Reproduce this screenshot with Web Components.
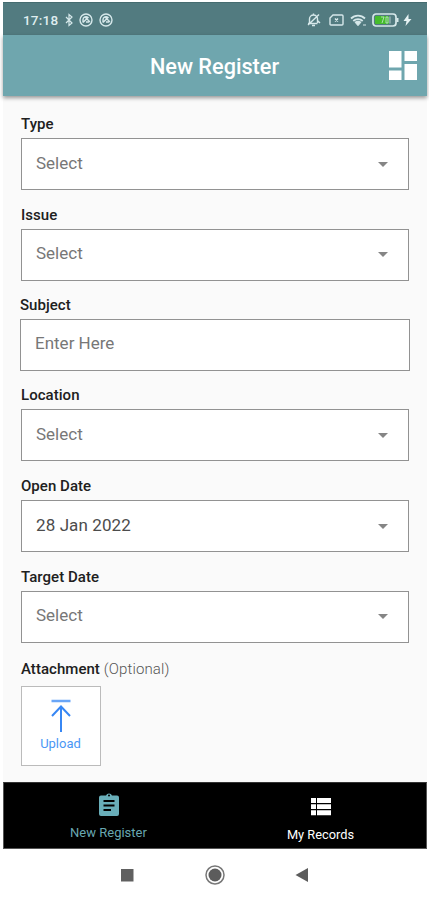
<!DOCTYPE html>
<html lang="en">
<head>
<meta charset="utf-8">
<title>New Register</title>
<style>
html,body{margin:0;background:#fff}
body{font-family:Roboto,"Liberation Sans",sans-serif;width:429px;height:900px;overflow:hidden}
</style>
</head>
<body>
<register-app></register-app>
<script>
const define = (name, html) => {
  const template = document.createElement('template');
  template.innerHTML = html;
  customElements.define(name, class extends HTMLElement {
    constructor() {
      super();
      this.attachShadow({mode: 'open'}).append(template.content.cloneNode(true));
    }
  });
};

define('status-bar', `
<style>
:host{display:flex;align-items:center;height:33px;box-sizing:border-box;padding:2px 15px 0 20px;background:#527b80;color:#dfedef;font-size:13.5px;font-weight:500;letter-spacing:.2px;border-top:1px solid #456c70}
svg{display:block;fill:none;stroke:#d6e8ea;stroke-width:1.4}
.time{width:41px;line-height:16px}
.l{display:flex;gap:5px;align-items:center}
.r{display:flex;align-items:center;margin-left:auto}
</style>
<span class="time">17:18</span>
<span class="l">
<svg width="10" height="14" viewBox="0 0 10 14"><path d="M2 4 8 10 5 12.500V1.500l3 2.500-6 6" stroke-width="1.200"/></svg>
<svg width="14" height="14" viewBox="0 0 14 14"><circle cx="7" cy="7" r="6"/><path d="M4 9.500V6.500a3 3 0 0 1 5-2L4 9.500M6 4l5 5M7 9h3"/></svg>
<svg width="14" height="14" viewBox="0 0 14 14" style="margin-left:1px"><circle cx="7" cy="7" r="6"/><path d="M4 9.500V6.500a3 3 0 0 1 5-2L4 9.500M6 4l5 5M7 9h3"/></svg>
</span>
<span class="r">
<svg width="15" height="14" viewBox="0 0 15 14"><path d="M2 10.500h9.500M3.500 10V6a4 4 0 0 1 8 0v4M6 12.500h3M2 12 13 1.500M7.500 2V.5M12 8l2 2"/></svg>
<svg width="15" height="12" viewBox="0 0 15 12" style="margin-left:8px"><path d="M4 1h9q1 0 1 1v8q0 1-1 1H2q-1 0-1-1V4ZM6 4.500l3 3m0-3-3 3"/></svg>
<svg width="17" height="13" viewBox="0 0 17 13" style="margin-left:6px"><path d="M1 4.500a10 10 0 0 1 14 0M3.300 7a7 7 0 0 1 9.400 0" stroke-width="1.800"/><path d="M5 8.200a5 5 0 0 1 6 0l-3 3.500ZM13 11h3" fill="#d6e8ea" stroke-width="1"/></svg>
<svg width="27" height="14" viewBox="0 0 27 14" style="margin-left:5px"><rect x="1" y="1" width="23" height="12" rx="3" stroke-width="1.700"/><path d="M25.500 5v4" stroke-width="2"/><rect x="3" y="3" width="14" height="8" rx="1" fill="#45bd2c" stroke="none"/><path d="M9 4h3l-2 6M14 4h2v6h-2ZM18 3.500v7" stroke-width="1" opacity=".7"/></svg>
<svg width="9" height="12" viewBox="0 0 9 12" style="margin-left:4px"><path d="M5.500 0 .5 7h3L2.500 12 8.500 5h-3Z" fill="#e6f2f3" stroke="none"/></svg>
</span>`);

define('app-header', `
<style>
:host{display:grid;grid-template-columns:1fr auto 1fr;align-items:center;height:61px;background:#6fa6ae;color:#fff;box-shadow:0 2px 4px #0006;position:relative;padding:0 9px 0 8px}
h1{margin:0;grid-column:2;font-size:21.7px;font-weight:500;line-height:28px;padding-top:2px}
svg{justify-self:end;display:block;margin-top:-2px}
</style>
<h1><slot></slot></h1>
<svg width="30" height="30" viewBox="0 0 30 30" fill="#fff"><path d="M1 1h12.500v16.500H1zM16.500 1H29v10H16.500zM1 20.500h12.500V30H1zM16.500 14H29v16H16.500z"/></svg>`);

define('form-field', `
<style>
:host{display:block;height:90.6px}
.label{height:23px;font-size:15px;line-height:18px;font-weight:500;color:#202020;letter-spacing:.04px}
.box{display:flex;align-items:center;justify-content:space-between;box-sizing:border-box;height:52px;border:1px solid #929292;background:#fff;padding:0 20px 3px 14px;font-size:17px;color:#777;width:388px}
:host([filled]) .box{color:#4c4c4c;padding-bottom:2px;letter-spacing:.1px}
:host([wide]) .box{width:390px;padding-bottom:4px}
:host([wide]) .arrow{display:none}
:host([wide]){margin-left:-1px;margin-right:-1px;height:90px}
:host([filled]){height:91px}
.arrow{width:0;border:5px solid transparent;border-top-color:#858585;border-bottom:0;margin-top:3px}
</style>
<div class="label"><slot name="label"></slot></div>
<div class="box"><slot></slot><i class="arrow"></i></div>`);

define('upload-field', `
<style>
:host{display:block;padding-top:1.6px}
.label{height:26px;font-size:15px;line-height:18px;font-weight:500;color:#202020;letter-spacing:.04px}
.label span{font-weight:300;color:#555;letter-spacing:.15px}
.tile{box-sizing:border-box;width:80px;height:80px;border:1px solid #bbb;background:#fff;display:flex;flex-direction:column;align-items:center;color:#4a97f5;font-size:13px;line-height:16px;padding-top:12px;padding-right:1px}
svg{display:block;margin-bottom:4px;stroke:#3787f4;fill:none;stroke-width:2}
</style>
<div class="label">Attachment <span>(Optional)</span></div>
<div class="tile"><svg width="20" height="33" viewBox="0 0 20 33"><path d="M.5 2h19" stroke="#6aa6f7" stroke-width="2.500"/><path d="M10 33V7.500M1 17l9-9.500 9 9.500"/></svg>Upload</div>`);

define('nav-tab', `
<style>
:host{display:flex;flex-direction:column;align-items:center;box-sizing:border-box;width:212px;font-size:12.8px;line-height:16px;color:#fff;padding-top:15px}
:host([active]){color:#68a7b1;padding-top:9px;padding-right:2px;font-size:13px}
::slotted(svg){display:block}
</style>
<slot name="icon"></slot><slot></slot>`);

define('tab-bar', `
<style>
:host{display:flex;box-sizing:border-box;height:67px;background:#000;border:1px solid #555;border-top-color:#333}
</style>
<nav-tab active><svg slot="icon" style="margin-bottom:8px" width="22" height="25" viewBox="0 0 22 25"><path fill="#69aeb9" fill-rule="evenodd" d="M3 3.500h5a3.200 3.200 0 0 1 6 0h5q2 0 2 2V22q0 2-2 2H3q-2 0-2-2V5.500q0-2 2-2M10 3.500a1 1 0 1 0 2 0a1 1 0 1 0-2 0M5.500 8v2h11V8ZM5.500 12.500v2h11v-2ZM5.500 17v2H13v-2Z"/></svg>New Register</nav-tab>
<nav-tab><svg slot="icon" style="margin-bottom:11px" width="20" height="18" viewBox="0 0 20 18" fill="#fff"><path d="M0 0h5v5H0zM6 0h14v5H6zM0 6.300h5v4.700H0zM6 6.300h14v4.700H6zM0 12.300h5v5H0zM6 12.300h14v5H6z"/></svg>My Records</nav-tab>`);

define('system-nav', `
<style>
:host{display:flex;align-items:center;height:51px;padding-left:118px}
svg{display:block}
</style>
<svg width="190" height="22" viewBox="0 0 190 22"><path d="M0 5h12.500v12.500H0z" fill="#606060"/><circle cx="94" cy="11" r="9" fill="none" stroke="#777" stroke-width="1.500"/><circle cx="94" cy="11" r="6.500" fill="#5c5c5c"/><path d="M187 4v14L174.500 11Z" fill="#5c5c5c"/></svg>`);

define('register-app', `
<style>
:host{display:flex;flex-direction:column;width:424px;height:898px;margin:2px 2px 0 3px}
main{flex:1;background:#fafafa;padding:19px 18px 0}
</style>
<status-bar></status-bar>
<app-header>New Register</app-header>
<main>
<form-field><span slot="label">Type</span>Select</form-field>
<form-field><span slot="label">Issue</span>Select</form-field>
<form-field wide><span slot="label">Subject</span>Enter Here</form-field>
<form-field><span slot="label">Location</span>Select</form-field>
<form-field filled><span slot="label">Open Date</span>28 Jan 2022</form-field>
<form-field><span slot="label">Target Date</span>Select</form-field>
<upload-field></upload-field>
</main>
<tab-bar></tab-bar>
<system-nav></system-nav>`);
</script>
</body>
</html>
